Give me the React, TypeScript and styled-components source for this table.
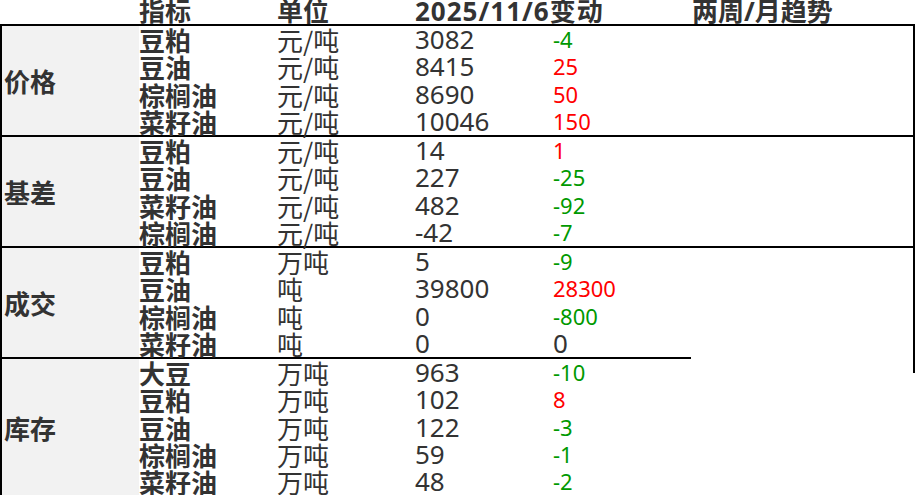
import styled, { createGlobalStyle } from "styled-components";

const GlobalStyle = createGlobalStyle`
  body {
    margin: 0;
    background: #fff;
  }
`;

const Sheet = styled.div`
  width: 915px;
  font-family: "Noto Sans CJK SC", sans-serif;
  color: #333;
`;

const HeaderRow = styled.div`
  display: grid;
  grid-template-columns: 139px 138px 138px 138px 138px 1fr;
  height: 24px;
  border-bottom: 2px solid #000;
`;

const HeadCell = styled.div<{ $shift?: number; $spread?: number }>`
  font-family: "Noto Sans", "Noto Sans CJK SC", sans-serif;
  font-size: 26px;
  font-weight: 700;
  line-height: 22px;
  white-space: nowrap;
  padding-left: ${(p) => p.$shift ?? 0}px;
  letter-spacing: ${(p) => p.$spread ?? 0}px;
`;

const Block = styled.div<{ $trend?: boolean }>`
  display: grid;
  grid-template-columns: ${(p) => (p.$trend ? "137px 552px 1fr" : "137px 552px")};
  border-left: 2px solid #000;
  border-bottom: 2px solid #000;

  &:last-child {
    border-bottom: none;
  }
`;

const Category = styled.div`
  display: flex;
  align-items: center;
  padding-left: 2px;
  background: #f2f2f2;
  font-size: 26px;
  font-weight: 700;
`;

const RowList = styled.div`
  display: grid;
  grid-auto-rows: 27.25px;
`;

const Row = styled.div`
  display: grid;
  grid-template-columns: repeat(4, 138px);
  line-height: 27.25px;
  white-space: nowrap;
`;

const Item = styled.div`
  font-size: 26px;
  font-weight: 700;
`;

const Unit = styled.div`
  font-size: 26px;
`;

const Value = styled.div`
  font-family: "Noto Sans", "Noto Sans CJK SC", sans-serif;
  font-size: 26px;
`;

const Change = styled.div<{ $tone: "up" | "down" }>`
  font-family: "Noto Sans", sans-serif;
  font-size: 22px;
  color: ${(p) => (p.$tone === "up" ? "#ff0000" : "#009900")};
`;

const Trend = styled.div`
  border-right: 2px solid #000;
`;

const Group = styled.div`
  display: grid;
  grid-template-columns: 691px 1fr;
`;

const TrendTail = styled.div`
  background: linear-gradient(#000, #000) right top / 2px 125px no-repeat;
`;

type Line = [string, string, string, number];

interface Section {
  name: string;
  rows: Line[];
}

const sections: Section[] = [
  {
    name: "价格",
    rows: [
      ["豆粕", "元/吨", "3082", -4],
      ["豆油", "元/吨", "8415", 25],
      ["棕榈油", "元/吨", "8690", 50],
      ["菜籽油", "元/吨", "10046", 150],
    ],
  },
  {
    name: "基差",
    rows: [
      ["豆粕", "元/吨", "14", 1],
      ["豆油", "元/吨", "227", -25],
      ["菜籽油", "元/吨", "482", -92],
      ["棕榈油", "元/吨", "-42", -7],
    ],
  },
  {
    name: "成交",
    rows: [
      ["豆粕", "万吨", "5", -9],
      ["豆油", "吨", "39800", 28300],
      ["棕榈油", "吨", "0", -800],
      ["菜籽油", "吨", "0", 0],
    ],
  },
  {
    name: "库存",
    rows: [
      ["大豆", "万吨", "963", -10],
      ["豆粕", "万吨", "102", 8],
      ["豆油", "万吨", "122", -3],
      ["棕榈油", "万吨", "59", -1],
      ["菜籽油", "万吨", "48", -2],
    ],
  },
];

const Rows = ({ rows }: { rows: Line[] }) => (
  <RowList>
    {rows.map(([item, unit, value, diff], i) => (
      <Row key={i}>
        <Item>{item}</Item>
        <Unit>{unit}</Unit>
        <Value>{value}</Value>
        {diff === 0 ? (
          <Value>0</Value>
        ) : (
          <Change $tone={diff > 0 ? "up" : "down"}>{diff}</Change>
        )}
      </Row>
    ))}
  </RowList>
);

const App = () => {
  const [price, basis, deal, stock] = sections;
  return (
    <Sheet>
      <GlobalStyle />
      <HeaderRow>
        <HeadCell />
        <HeadCell>指标</HeadCell>
        <HeadCell>单位</HeadCell>
        <HeadCell $spread={1}>2025/11/6变动</HeadCell>
        <HeadCell />
        <HeadCell $shift={1}>两周/月趋势</HeadCell>
      </HeaderRow>
      {[price, basis].map((s) => (
        <Block key={s.name} $trend>
          <Category>{s.name}</Category>
          <Rows rows={s.rows} />
          <Trend />
        </Block>
      ))}
      <Group>
        <div>
          {[deal, stock].map((s) => (
            <Block key={s.name}>
              <Category>{s.name}</Category>
              <Rows rows={s.rows} />
            </Block>
          ))}
        </div>
        <TrendTail />
      </Group>
    </Sheet>
  );
};

export default App;
